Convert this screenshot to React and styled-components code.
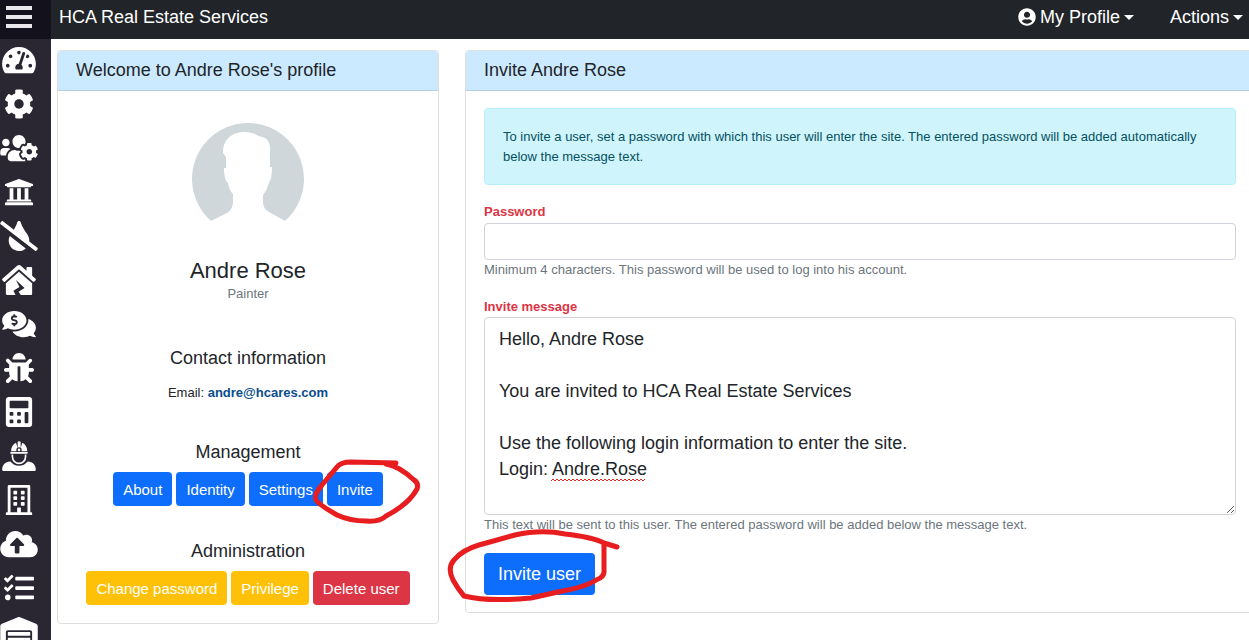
import React from "react";
import styled, { createGlobalStyle } from "styled-components";
import {
  FaTachometerAlt, FaCog, FaUsersCog, FaUniversity, FaTintSlash, FaHouseDamage,
  FaCommentsDollar, FaBug, FaCalculator, FaRegBuilding, FaCloudUploadAlt,
  FaTasks, FaWarehouse, FaUserCircle,
} from "react-icons/fa";

const GlobalStyle = createGlobalStyle`
  *, *::before, *::after { box-sizing: border-box; }
  body {
    margin: 0;
    background: #fff;
    color: #212529;
    font: 13px/20px "Liberation Sans", Arial, sans-serif;
  }
  h1, h2, h3, p { margin: 0; font-weight: 400; }
  button, input, textarea { font-family: inherit; }
`;

const Page = styled.div`
  display: flex;
  min-height: 100vh;
`;

const Sidebar = styled.nav`
  position: sticky;
  top: 0;
  flex: 0 0 51px;
  height: 100vh;
  overflow: hidden;
  background: #2a2733;
`;

const MenuButton = styled.button`
  display: flex;
  flex-direction: column;
  gap: 5px;
  width: 100%;
  height: 39px;
  padding: 6px;
  border: 0;
  background: #13111c;
`;

const MenuBar = styled.span`
  width: 26px;
  height: 4px;
  background: #e9e7ec;
`;

const SideLink = styled.a`
  display: flex;
  align-items: center;
  justify-content: center;
  width: 38px;
  height: 44px;
  padding-bottom: 2px;
  color: #fff;

  svg {
    flex: none;
    width: 38px;
    height: 30px;
  }
`;

const Column = styled.div`
  flex: 1;
  min-width: 0;
  overflow: hidden;
`;

const TopBar = styled.header`
  display: flex;
  align-items: center;
  gap: 36px;
  height: 39px;
  padding: 0 6px 5px 8px;
  background: #212529;
  color: #fff;
`;

const SiteTitle = styled.h1`
  flex: 1;
  font-size: 18px;
  line-height: 24px;
`;

const DropButton = styled.button`
  display: flex;
  align-items: center;
  gap: 4px;
  padding: 0;
  border: 0;
  background: none;
  color: inherit;
  font-size: 18px;
  line-height: 24px;

  &::after {
    content: "";
    border: 5px solid transparent;
    border-top-color: currentColor;
    border-bottom: 0;
  }
`;

const Content = styled.main`
  display: grid;
  grid-template-columns: 382fr 790fr;
  align-items: start;
  gap: 26px;
  margin-right: -6px;
  padding: 11px 0 16px 6px;
`;

const Card = styled.section`
  min-width: 0;
  border: 1px solid #dfdfdf;
  border-radius: 4px;
`;

const CardHeader = styled.h2`
  padding: 6px 18px 7px;
  border-bottom: 1px solid #b0cfe4;
  border-radius: 3px 3px 0 0;
  background: #cceaff;
  font-size: 18px;
  line-height: 26px;
`;

const ProfileBody = styled.div`
  display: flex;
  flex-direction: column;
  align-items: center;
  padding: 32px 16px 18px;
`;

const Avatar = styled.svg`
  width: 112px;
  height: 98px;
`;

const Name = styled.h3`
  margin-top: 37px;
  font-size: 22px;
  line-height: 26px;
`;

const Role = styled.p`
  color: #6c757d;
`;

const GroupTitle = styled.h3`
  margin-top: ${(p) => p.$space}px;
  font-size: 18px;
  line-height: 22px;
`;

const Email = styled.p`
  margin-top: 14px;
`;

const MailLink = styled.a`
  color: #0a4d8c;
  font-weight: 700;
  text-decoration: none;
`;

const ButtonRow = styled.div`
  display: flex;
  gap: 4px;
  margin-top: 9px;
`;

const tones = { primary: "#0d6efd", warning: "#ffc107", danger: "#dc3545" };

const Button = styled.button`
  padding: ${(p) => (p.$large ? "8px 14px" : "8px 10px 6px")};
  border: 0;
  border-radius: 4px;
  background: ${(p) => tones[p.$tone]};
  color: #fff;
  font-size: ${(p) => (p.$large ? 18 : 15)}px;
  line-height: ${(p) => (p.$large ? 26 : 20)}px;
  white-space: nowrap;
`;

const Marked = styled.span`
  position: relative;
  display: inline-flex;
`;

const Marker = styled.svg`
  position: absolute;
  z-index: 1;
  left: ${(p) => p.$left}px;
  top: ${(p) => p.$top}px;
  overflow: visible;
  pointer-events: none;
  fill: none;
  stroke: #e71d1f;
  stroke-width: 5;
  stroke-linecap: round;
  stroke-linejoin: round;
`;

const InviteForm = styled.form`
  display: flex;
  flex-direction: column;
  align-items: stretch;
  padding: 17px 18px;
`;

const Notice = styled.p`
  margin-bottom: 17px;
  padding: 18px 18px 17px;
  border: 1px solid #b6effb;
  border-radius: 4px;
  background: #cff4fc;
  color: #055160;
`;

const Label = styled.label`
  align-self: flex-start;
  color: #dc3545;
  font-weight: 700;
`;

const fieldLook = `
  display: block;
  width: 100%;
  border: 1px solid #ced4da;
  border-radius: 4px;
  background: #fff;
  color: #212529;
  font-size: 18px;
  line-height: 26px;
`;

const PasswordInput = styled.input`
  ${fieldLook}
  height: 37px;
  margin-top: 1px;
  padding: 5px 14px;
`;

const MessageWrap = styled.div`
  position: relative;
`;

const MessageInput = styled.textarea`
  ${fieldLook}
  padding: 8px 14px 6px;
  resize: vertical;
`;

const SpellMark = styled.svg`
  position: absolute;
  left: 67px;
  top: 161px;
  pointer-events: none;
`;

const Hint = styled.p`
  margin-bottom: ${(p) => p.$after}px;
  color: #6c757d;
`;

function Worker() {
  return (
    <svg viewBox="5 62 104 91" fill="currentColor" aria-hidden="true">
      <path d="M33 93c0-13 6-22 15-26l5 17V64q4-3 9 0v20l5-17c9 4 15 13 15 26H65v-4a8 8 0 0 0-16 0v4z" />
      <circle cx="57" cy="89" r="4" />
      <rect x="30" y="95" width="54" height="6" rx="3" />
      <path d="M37 103v6c0 28 40 28 40 0v-6" fill="none" stroke="currentColor" strokeWidth="5" />
      <path d="M6 149c0-14 8-24 25-25q10 13 26 13t26-13c17 1 25 11 25 25q0 4-5 4H11q-5 0-5-4z" />
    </svg>
  );
}

const sections = [
  ["Dashboard", FaTachometerAlt], ["Settings", FaCog], ["Users", FaUsersCog],
  ["Bank", FaUniversity], ["Water", FaTintSlash], ["Damage", FaHouseDamage],
  ["Payments", FaCommentsDollar], ["Issues", FaBug], ["Calculator", FaCalculator],
  ["Workers", Worker], ["Buildings", FaRegBuilding], ["Uploads", FaCloudUploadAlt],
  ["Tasks", FaTasks], ["Warehouse", FaWarehouse],
];

const message = `Hello, Andre Rose

You are invited to HCA Real Estate Services

Use the following login information to enter the site.
Login: Andre.Rose`;

export default function App() {
  return (
    <Page>
      <GlobalStyle />
      <Sidebar aria-label="Main">
        <MenuButton type="button" aria-label="Menu">
          <MenuBar /><MenuBar /><MenuBar />
        </MenuButton>
        {sections.map(([label, Icon]) => (
          <SideLink key={label} href="#" aria-label={label}><Icon /></SideLink>
        ))}
      </Sidebar>
      <Column>
        <TopBar>
          <SiteTitle>HCA Real Estate Services</SiteTitle>
          <DropButton type="button"><FaUserCircle />My Profile</DropButton>
          <DropButton type="button">Actions</DropButton>
        </TopBar>
        <Content>
          <Card>
            <CardHeader>Welcome to Andre Rose's profile</CardHeader>
            <ProfileBody>
              <Avatar viewBox="0 0 112 98" aria-hidden="true">
                <path d="M19 98A56 56 0 1 1 93 98Z" fill="#d0d7db" />
                <path d="M17 99L35 90Q41 86 41 79V71Q37 67 36 60Q32 57 32 45H34V34L31 30C31 16 40 9 53 9C61 9 66 13 70 14C75 15 78 19 78 25V44H80Q80 56 77 59Q75 67 71 72V79Q71 86 77 89L95 99Z" fill="#fff" />
              </Avatar>
              <Name>Andre Rose</Name>
              <Role>Painter</Role>
              <GroupTitle $space={43}>Contact information</GroupTitle>
              <Email>Email: <MailLink href="mailto:andre@hcares.com">andre@hcares.com</MailLink></Email>
              <GroupTitle $space={38}>Management</GroupTitle>
              <ButtonRow>
                <Button type="button" $tone="primary">About</Button>
                <Button type="button" $tone="primary">Identity</Button>
                <Button type="button" $tone="primary">Settings</Button>
                <Marked>
                  <Button type="button" $tone="primary">Invite</Button>
                  <Marker $left={-12} $top={-12} width="104" height="64" aria-hidden="true">
                    <path d="M81 3L36 2Q26 2 22 7L7 25Q-1 34 1 40Q3 44 22 55Q35 61 51 61Q65 62 71 56Q94 44 102 29Q104 23 99 20Q84 6 71 4" />
                  </Marker>
                </Marked>
              </ButtonRow>
              <GroupTitle $space={34}>Administration</GroupTitle>
              <ButtonRow>
                <Button type="button" $tone="warning">Change password</Button>
                <Button type="button" $tone="warning">Privilege</Button>
                <Button type="button" $tone="danger">Delete user</Button>
              </ButtonRow>
            </ProfileBody>
          </Card>
          <Card>
            <CardHeader>Invite Andre Rose</CardHeader>
            <InviteForm>
              <Notice>
                To invite a user, set a password with which this user will enter the site. The entered
                password will be added automatically below the message text.
              </Notice>
              <Label htmlFor="password">Password</Label>
              <PasswordInput id="password" type="password" />
              <Hint $after={17}>Minimum 4 characters. This password will be used to log into his account.</Hint>
              <Label htmlFor="message">Invite message</Label>
              <MessageWrap>
                <MessageInput id="message" rows={7} defaultValue={message} spellCheck={false} />
                <SpellMark width="94" height="4" aria-hidden="true">
                  <defs>
                    <pattern id="wave" width="4" height="4" patternUnits="userSpaceOnUse">
                      <path d="M0 3L2 1L4 3" fill="none" stroke="#e8251f" />
                    </pattern>
                  </defs>
                  <rect width="94" height="4" fill="url(#wave)" />
                </SpellMark>
              </MessageWrap>
              <Hint $after={18}>This text will be sent to this user. The entered password will be added below the message text.</Hint>
              <div>
                <Marked>
                  <Button type="submit" $tone="primary" $large>Invite user</Button>
                  <Marker $left={-34} $top={-21} width="168" height="70" aria-hidden="true">
                    <path d="M167 15L154 11Q142 5 115 2Q92-3 65 3L29 13Q12 18 4 28Q-3 36 3 48Q8 57 14 64Q38 70 81 66L108 60Q136 55 146 48Q155 45 154 38V11" />
                  </Marker>
                </Marked>
              </div>
            </InviteForm>
          </Card>
        </Content>
      </Column>
    </Page>
  );
}
